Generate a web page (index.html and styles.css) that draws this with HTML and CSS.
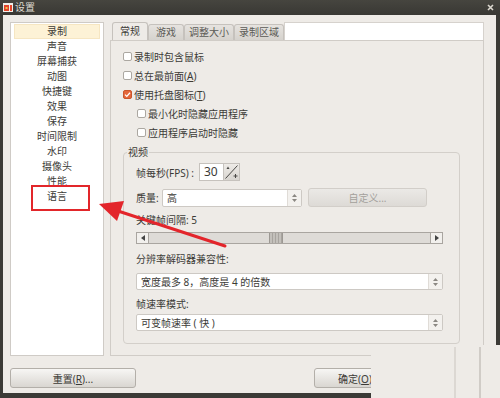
FILE: index.html
```html
<!DOCTYPE html>
<html lang="zh-CN">
<head>
    <meta charset="UTF-8">
    <title>设置</title>
    <link rel="stylesheet" href="styles.css">
</head>
<body>
    <div class="window">
        <!-- タイトルバー -->
        <div class="titlebar">
            <svg class="app-icon" viewBox="0 0 10 9" width="10" height="9">
                <rect x="0" y="0" width="10" height="9" fill="#f1eee9"/>
                <rect x="1" y="2" width="5" height="6" fill="#e2452b"/>
                <rect x="7" y="2" width="2" height="6" fill="#e2452b"/>
                <rect x="2.5" y="4" width="2" height="2" fill="#f6c24a"/>
            </svg>
            <span class="title">设置</span>
            <svg class="close" viewBox="0 0 7 7" width="7" height="7">
                <path d="M1 1 L6 6 M6 1 L1 6" stroke="#dcd8cf" stroke-width="1.6"/>
            </svg>
        </div>

        <div class="frame">
            <div class="main">
                <!-- 左のリスト -->
                <ul class="sidebar">
                    <li class="selected">录制</li>
                    <li>声音</li>
                    <li>屏幕捕获</li>
                    <li>动图</li>
                    <li>快捷键</li>
                    <li>效果</li>
                    <li>保存</li>
                    <li>时间限制</li>
                    <li>水印</li>
                    <li>摄像头</li>
                    <li>性能</li>
                    <li>语言</li>
                </ul>

                <!-- タブ -->
                <div class="tabs">
                    <div class="tab-bar">
                        <div class="tab active">常规</div>
                        <div class="tab">游戏</div>
                        <div class="tab">调整大小</div>
                        <div class="tab">录制区域</div>
                        <div class="tab-fill"></div>
                    </div>
                    <div class="tab-page">
                        <div class="check"><span class="box"></span>录制时包含鼠标</div>
                        <div class="check"><span class="box"></span>总在最前面(<u>A</u>)</div>
                        <div class="check"><span class="box checked"><svg viewBox="0 0 9 9" width="9" height="9"><path d="M2 4.6 L3.8 6.4 L7 2.8" fill="none" stroke="#fff" stroke-width="1.3"/></svg></span>使用托盘图标(<u>T</u>)</div>
                        <div class="check sub"><span class="box"></span>最小化时隐藏应用程序</div>
                        <div class="check sub"><span class="box"></span>应用程序启动时隐藏</div>

                        <fieldset class="group">
                            <legend>视频</legend>
                            <div class="row fps">
                                <span class="fps-label">帧每秒(FPS) :</span>
                                <div class="spin">
                                    <span class="spin-value">30</span>
                                    <span class="spin-btn">
                                        <svg viewBox="0 0 15 16" width="15" height="16">
                                            <path d="M13.5 1.5 L1.5 14.5" stroke="#4a4946" stroke-width="1"/>
                                            <path d="M2.5 5 L4 2.5 L5.5 5 Z" fill="#4a4946"/>
                                            <path d="M9.5 12 H13.5 M11.5 10 V14" stroke="#4a4946" stroke-width="1"/>
                                        </svg>
                                    </span>
                                </div>
                            </div>
                            <div class="row quality">
                                <span class="q-label">质量:</span>
                                <div class="combo q-combo">
                                    <span class="combo-text">高</span>
                                    <span class="combo-arrow"><svg viewBox="0 0 5 8" width="5" height="8"><path d="M2.5 0 L0 3 H5 Z M0 5 H5 L2.5 8 Z" fill="#8b8883"/></svg></span>
                                </div>
                                <button class="btn custom" disabled>自定义...</button>
                            </div>
                            <div class="label key-label">关键帧间隔: 5</div>
                            <div class="slider">
                                <span class="slider-arrow"><svg viewBox="0 0 4 6" width="4" height="6"><path d="M4 0 L0 3 L4 6 Z" fill="#444"/></svg></span>
                                <span class="slider-before"></span>
                                <span class="slider-handle"></span>
                                <span class="slider-after"></span>
                                <span class="slider-arrow right"><svg viewBox="0 0 4 6" width="4" height="6"><path d="M0 0 L4 3 L0 6 Z" fill="#444"/></svg></span>
                            </div>
                            <div class="label res-label">分辨率解码器兼容性:</div>
                            <div class="combo wide">
                                <span class="combo-text">宽度最多 8，高度是 4 的倍数</span>
                                <span class="combo-arrow"><svg viewBox="0 0 5 8" width="5" height="8"><path d="M2.5 0 L0 3 H5 Z M0 5 H5 L2.5 8 Z" fill="#8b8883"/></svg></span>
                            </div>
                            <div class="label rate-label">帧速率模式:</div>
                            <div class="combo wide last">
                                <span class="combo-text">可变帧速率 ( 快 )</span>
                                <span class="combo-arrow"><svg viewBox="0 0 5 8" width="5" height="8"><path d="M2.5 0 L0 3 H5 Z M0 5 H5 L2.5 8 Z" fill="#8b8883"/></svg></span>
                            </div>
                        </fieldset>
                    </div>
                </div>
            </div>

            <!-- 下のボタン -->
            <div class="buttons">
                <button class="btn reset">重置(<u>R</u>)...</button>
                <button class="btn ok">确定(<u>O</u>)</button>
                <button class="btn cancel">取消(<u>C</u>)</button>
            </div>
        </div>
    </div>

    <!-- 注釈 -->
    <div class="mark"></div>
    <svg class="arrow" viewBox="0 0 500 398" width="500" height="398">
        <path d="M225 246 L118 211" stroke="#e3252b" stroke-width="3" stroke-linecap="round"/>
        <path d="M99 204 L124 201 L117 221 Z" fill="#e3252b"/>
    </svg>
    <div class="patch"></div>
</body>
</html>
```

FILE: styles.css
```css
body {
    margin: 0;
    width: 500px;
    height: 398px;
    position: relative;
    overflow: hidden;
    background-color: #3b3a36;
    font-family: "Noto Sans", "Noto Sans CJK SC", sans-serif;
    font-size: 10px;
    color: #3c3b37;
}

u {
    text-decoration: underline;
    text-underline-offset: 1px;
}

.window {
    display: flex;
    flex-direction: column;
    height: 398px;
}

/* タイトルバー */
.titlebar {
    height: 15px;
    display: flex;
    align-items: center;
    padding: 0 6px 0 3px;
    background: linear-gradient(#46453f, #393834);
    color: #dfdbd2;
}

.app-icon {
    margin-right: 2px;
}

.title {
    flex: 1;
    line-height: 15px;
}

.frame {
    flex: 1;
    margin: 0 4px 5px 3px;
    padding: 7px 12px 0 7px;
    background-color: #eeebe7;
    display: flex;
    flex-direction: column;
}

.main {
    display: flex;
    gap: 6px;
    height: 334px;
}

/* 左のリスト */
.sidebar {
    width: 94px;
    margin: 0;
    padding: 1px 3px;
    list-style: none;
    background-color: #fff;
    border: 1px solid #cfcbc6;
    box-sizing: border-box;
}

.sidebar li {
    height: 15px;
    line-height: 15px;
    text-align: center;
}

.sidebar li.selected {
    background-color: #fdf2d6;
    box-shadow: inset 0 0 0 1px #f6e6c2;
}

/* タブ */
.tabs {
    flex: 1;
    display: flex;
    flex-direction: column;
}

.tab-bar {
    display: flex;
    height: 18px;
    padding-left: 2px;
}

.tab {
    box-sizing: border-box;
    min-width: 36px;
    padding: 0 4px;
    margin-top: 2px;
    text-align: center;
    line-height: 15px;
    color: #5b5a56;
    border: 1px solid #c6c2bd;
    border-bottom: none;
    border-radius: 3px 3px 0 0;
    background: linear-gradient(#e6e3df, #d5d2cd);
}

.tab.active {
    margin-top: 0;
    line-height: 17px;
    color: #3c3b37;
    background: #eeebe7;
}

.tab-fill {
    flex: 1;
    background-color: #fff;
    border: 1px solid #d6d2cd;
    border-bottom: none;
}

.tab-page {
    flex: 1;
    padding: 6px 0 0 12px;
    border: 1px solid #d0ccc7;
    background-color: #eeebe7;
}

.check {
    display: flex;
    align-items: center;
    height: 19px;
}

.check.sub {
    padding-left: 14px;
}

.box {
    box-sizing: border-box;
    width: 9px;
    height: 9px;
    margin-right: 2px;
    border: 1px solid #aba7a1;
    border-radius: 2px;
    background-color: #fff;
    display: flex;
    align-items: center;
    justify-content: center;
}

.box.checked {
    border-color: #c9552b;
    background-color: #e5663a;
}

.box.checked svg {
    flex: none;
}

/* 視頻グループ */
.group {
    box-sizing: border-box;
    width: 337px;
    margin: 4px 0 0;
    padding: 5px 16px 12px 12px;
    border: 1px solid #d3cfca;
    border-radius: 4px;
    min-width: 0;
}

.group legend {
    margin-left: -9px;
    padding: 0 1px;
    line-height: 12px;
}

.row {
    display: flex;
    align-items: center;
}

.fps {
    height: 18px;
}

.fps-label {
    width: 63px;
}

.spin {
    box-sizing: border-box;
    width: 41px;
    height: 18px;
    display: flex;
    border: 1px solid #c6c2bd;
    background-color: #fff;
}

.spin-value {
    flex: 1;
    padding-left: 4px;
    font-size: 12px;
    line-height: 16px;
}

.spin-btn {
    width: 15px;
    border-left: 1px solid #c6c2bd;
    background: linear-gradient(#eeebe7, #d8d5d0);
}

.spin-btn svg {
    display: block;
}

.quality {
    margin-top: 7px;
    height: 19px;
}

.q-label {
    width: 26px;
}

.combo {
    box-sizing: border-box;
    height: 17px;
    display: flex;
    border: 1px solid #cdc9c4;
    border-radius: 2px;
    background-color: #fff;
}

.q-combo {
    width: 140px;
    height: 18px;
}

.combo-text {
    flex: 1;
    padding-left: 4px;
    display: flex;
    align-items: center;
}

.combo-arrow {
    width: 13px;
    display: flex;
    align-items: center;
    justify-content: center;
    border-left: 1px solid #e0dcd7;
    background-color: #f3f1ee;
}

.btn {
    box-sizing: border-box;
    height: 20px;
    padding: 0;
    font-family: inherit;
    font-size: 10px;
    color: #3c3b37;
    border: 1px solid #b3afa9;
    border-radius: 3px;
    background: linear-gradient(#f7f6f4, #d9d6d1);
}

.btn.custom {
    width: 119px;
    height: 19px;
    margin-left: 6px;
    color: #a3a09b;
    border-color: #d2cec9;
    background: linear-gradient(#ebe9e6, #dddad6);
}

.label {
    line-height: 12px;
}

.key-label {
    margin-top: 7px;
}

.slider {
    box-sizing: border-box;
    height: 12px;
    margin-top: 6px;
    display: flex;
    border: 1px solid #a9a5a0;
    background-color: #dedbd7;
}

.slider-arrow {
    width: 11px;
    display: flex;
    align-items: center;
    justify-content: center;
    border-right: 1px solid #a9a5a0;
    background-color: #f2f0ed;
}

.slider-arrow.right {
    border-right: none;
    border-left: 1px solid #a9a5a0;
}

.slider-before {
    width: 120px;
}

.slider-handle {
    width: 12px;
    border-left: 1px solid #9c9893;
    border-right: 1px solid #9c9893;
    background: repeating-linear-gradient(90deg, #c3c0bb 0 2px, #a8a49f 2px 3px);
}

.slider-after {
    flex: 1;
}

.res-label {
    margin-top: 9px;
}

.combo.wide {
    margin-top: 8px;
}

.rate-label {
    margin-top: 8px;
}

.combo.wide.last {
    margin-top: 4px;
}

/* 下のボタン */
.buttons {
    display: flex;
    gap: 6px;
    margin-top: 12px;
}

.btn.reset {
    width: 126px;
}

.btn.ok {
    width: 82px;
    margin-left: auto;
}

.btn.cancel {
    width: 82px;
}

/* 注釈 */
.mark {
    position: absolute;
    left: 31px;
    top: 185px;
    width: 59px;
    height: 26px;
    box-sizing: border-box;
    border: 2px solid #e2262a;
}

.arrow {
    position: absolute;
    left: 0;
    top: 0;
    pointer-events: none;
}

/* 右下の貼り付け部分 */
.patch {
    position: absolute;
    left: 371px;
    top: 345px;
    width: 129px;
    height: 53px;
    background-color: #eeebe7;
}

.patch::before,
.patch::after {
    content: "";
    position: absolute;
    top: 2px;
    bottom: 0;
    width: 2px;
}

.patch::before {
    left: 83px;
    background-color: #dcd8d3;
}

.patch::after {
    left: 108px;
    background-color: #d0ccc7;
}
```
